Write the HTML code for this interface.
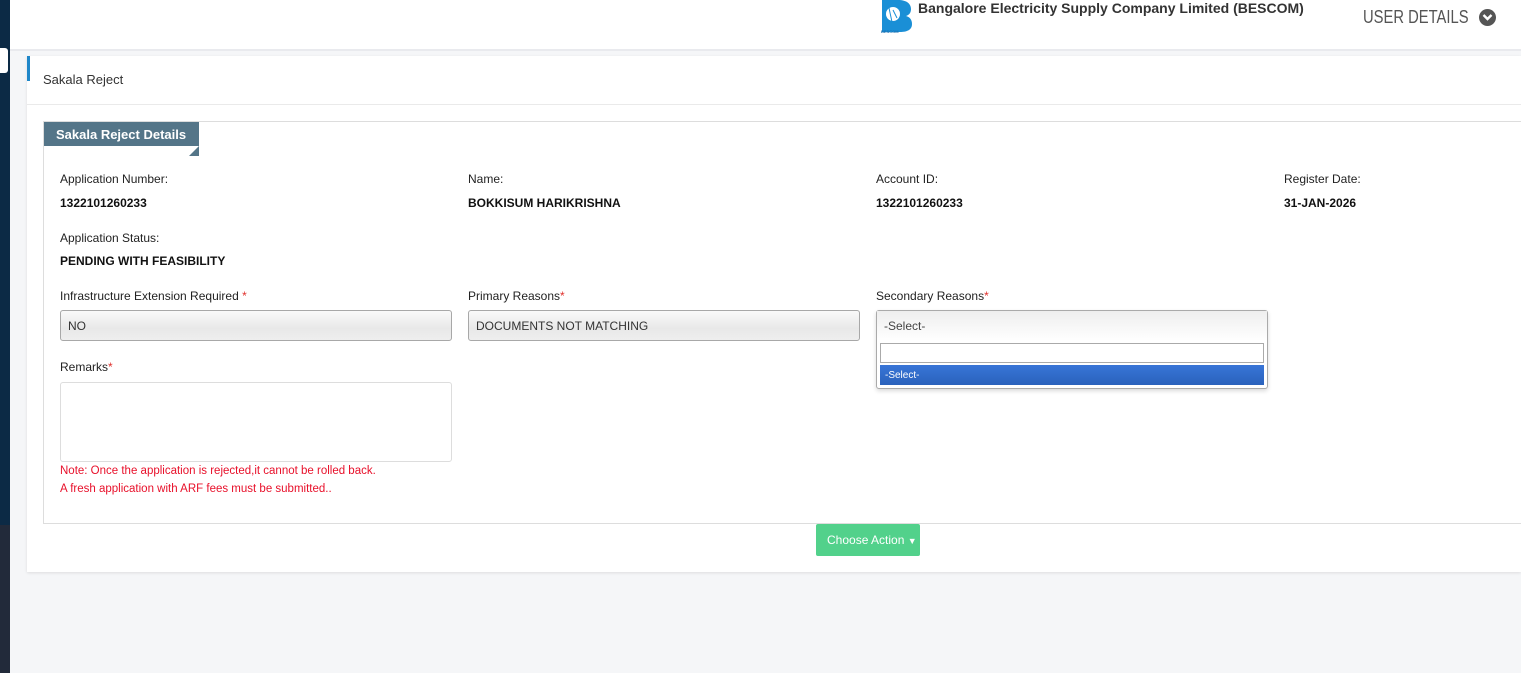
<!DOCTYPE html>
<html><head><meta charset="utf-8"><style>
*{box-sizing:border-box;margin:0;padding:0}
body{width:1521px;height:673px;overflow:hidden;background:#f5f6f8;font-family:"Liberation Sans",sans-serif;position:relative;color:#111}
.a{position:absolute}
.lbl{font-size:12px;color:#222}
.val{font-size:12px;font-weight:bold;color:#111}
.star{color:#e0302c}
.inp{border:1px solid #a8a8a8;border-radius:3px;background:linear-gradient(#fafafa,#e8e8e8 60%,#eee);font-size:12px;color:#333;padding:8px 7px;height:31px;width:392px}
</style></head><body>
<div class="a" style="left:0;top:0;width:10px;height:525px;background:#0c2a45"></div>
<div class="a" style="left:0;top:525px;width:10px;height:148px;background:#222a3a"></div>
<div class="a" style="left:0;top:48px;width:8px;height:25px;background:#fff;border-radius:0 3px 3px 0"></div>
<div class="a" style="left:10px;top:0;width:1511px;height:51px;background:#fff;border-bottom:2px solid #e9eaee"></div>
<svg class="a" style="left:880px;top:0" width="34" height="34" viewBox="0 0 34 34"><path d="M2 0h16c9 0 13 4 13 9 0 4-2 6-5 7 4 1 6 4 6 8 0 6-5 8-12 8H2z" fill="#1a8fd6"/><circle cx="13" cy="14" r="7" fill="#fff"/><path d="M9 8l3 14M13 10l4 8" stroke="#1a8fd6" stroke-width="1"/><text x="1" y="33" font-size="4" fill="#1a6fb0" font-family="Liberation Sans" font-weight="bold">BESCOM</text></svg>
<div class="a" style="left:918px;top:0;font-size:14px;font-weight:bold;color:#333">Bangalore Electricity Supply Company Limited (BESCOM)</div>
<div class="a" style="left:1363px;top:7px;font-size:18px;color:#555;transform:scaleX(0.82);transform-origin:left top;white-space:nowrap">USER DETAILS</div>
<div class="a" style="left:1479px;top:9px;width:17px;height:17px;border-radius:50%;background:#555"></div>
<svg class="a" style="left:1482px;top:13px" width="11" height="9"><path d="M1.5 2l4 4 4-4" stroke="#fff" stroke-width="2.4" fill="none"/></svg>

<div class="a" style="left:27px;top:56px;width:1494px;height:516px;background:#fff;box-shadow:0 1px 3px rgba(0,0,0,.1)"></div>
<div class="a" style="left:27px;top:56px;width:3px;height:25px;background:#1f87c9"></div>
<div class="a" style="left:43px;top:72px;font-size:13px;color:#333">Sakala Reject</div>
<div class="a" style="left:27px;top:104px;width:1494px;height:1px;background:#eaeaea"></div>
<div class="a" style="left:43px;top:121px;width:1480px;height:403px;border:1px solid #ddd"></div>
<div class="a" style="left:44px;top:122px;width:155px;height:24px;background:#547588;color:#fff;font-size:13px;font-weight:bold;padding:5px 0 0 12px;white-space:nowrap">Sakala Reject Details</div>
<svg class="a" style="left:189px;top:146px" width="10" height="10"><path d="M10 0V10H0z" fill="#547588"/></svg>

<div class="a lbl" style="left:60px;top:172px">Application Number:</div>
<div class="a val" style="left:60px;top:196px">1322101260233</div>
<div class="a lbl" style="left:468px;top:172px">Name:</div>
<div class="a val" style="left:468px;top:196px">BOKKISUM HARIKRISHNA</div>
<div class="a lbl" style="left:876px;top:172px">Account ID:</div>
<div class="a val" style="left:876px;top:196px">1322101260233</div>
<div class="a lbl" style="left:1284px;top:172px">Register Date:</div>
<div class="a val" style="left:1284px;top:196px">31-JAN-2026</div>
<div class="a lbl" style="left:60px;top:231px">Application Status:</div>
<div class="a val" style="left:60px;top:254px">PENDING WITH FEASIBILITY</div>

<div class="a lbl" style="left:60px;top:289px">Infrastructure Extension Required <span class="star">*</span></div>
<div class="a lbl" style="left:468px;top:289px">Primary Reasons<span class="star">*</span></div>
<div class="a lbl" style="left:876px;top:289px">Secondary Reasons<span class="star">*</span></div>
<div class="a inp" style="left:60px;top:310px">NO</div>
<div class="a inp" style="left:468px;top:310px">DOCUMENTS NOT MATCHING</div>
<div class="a" style="left:876px;top:310px;width:392px;height:79px;border:1px solid #aaa;border-radius:3px;background:#fff;box-shadow:0 2px 4px rgba(0,0,0,.15)">
 <div style="height:30px;background:linear-gradient(#eee,#fff);font-size:12px;color:#444;padding:8px 7px">-Select-</div>
 <div style="margin:2px 3px 0;height:20px;border:1px solid #aaa"></div>
 <div style="margin:2px 3px 0;height:20px;background:linear-gradient(#3875d7,#2a62bc);color:#fff;font-size:10px;padding:5px 5px">-Select-</div>
</div>

<div class="a lbl" style="left:60px;top:360px">Remarks<span class="star">*</span></div>
<div class="a" style="left:60px;top:382px;width:392px;height:80px;border:1px solid #ddd;border-radius:3px"></div>
<div class="a" style="left:60px;top:462px;font-size:11.5px;color:#e8102a;line-height:18px">Note: Once the application is rejected,it cannot be rolled back.<br>A fresh application with ARF fees must be submitted..</div>

<div class="a" style="left:816px;top:524px;width:104px;height:32px;background:#52d18b;border-radius:2px;color:#fff;font-size:12px;padding:9px 0 0 11px;white-space:nowrap">Choose Action <span style="font-size:9px">&#9660;</span></div>
</body></html>
